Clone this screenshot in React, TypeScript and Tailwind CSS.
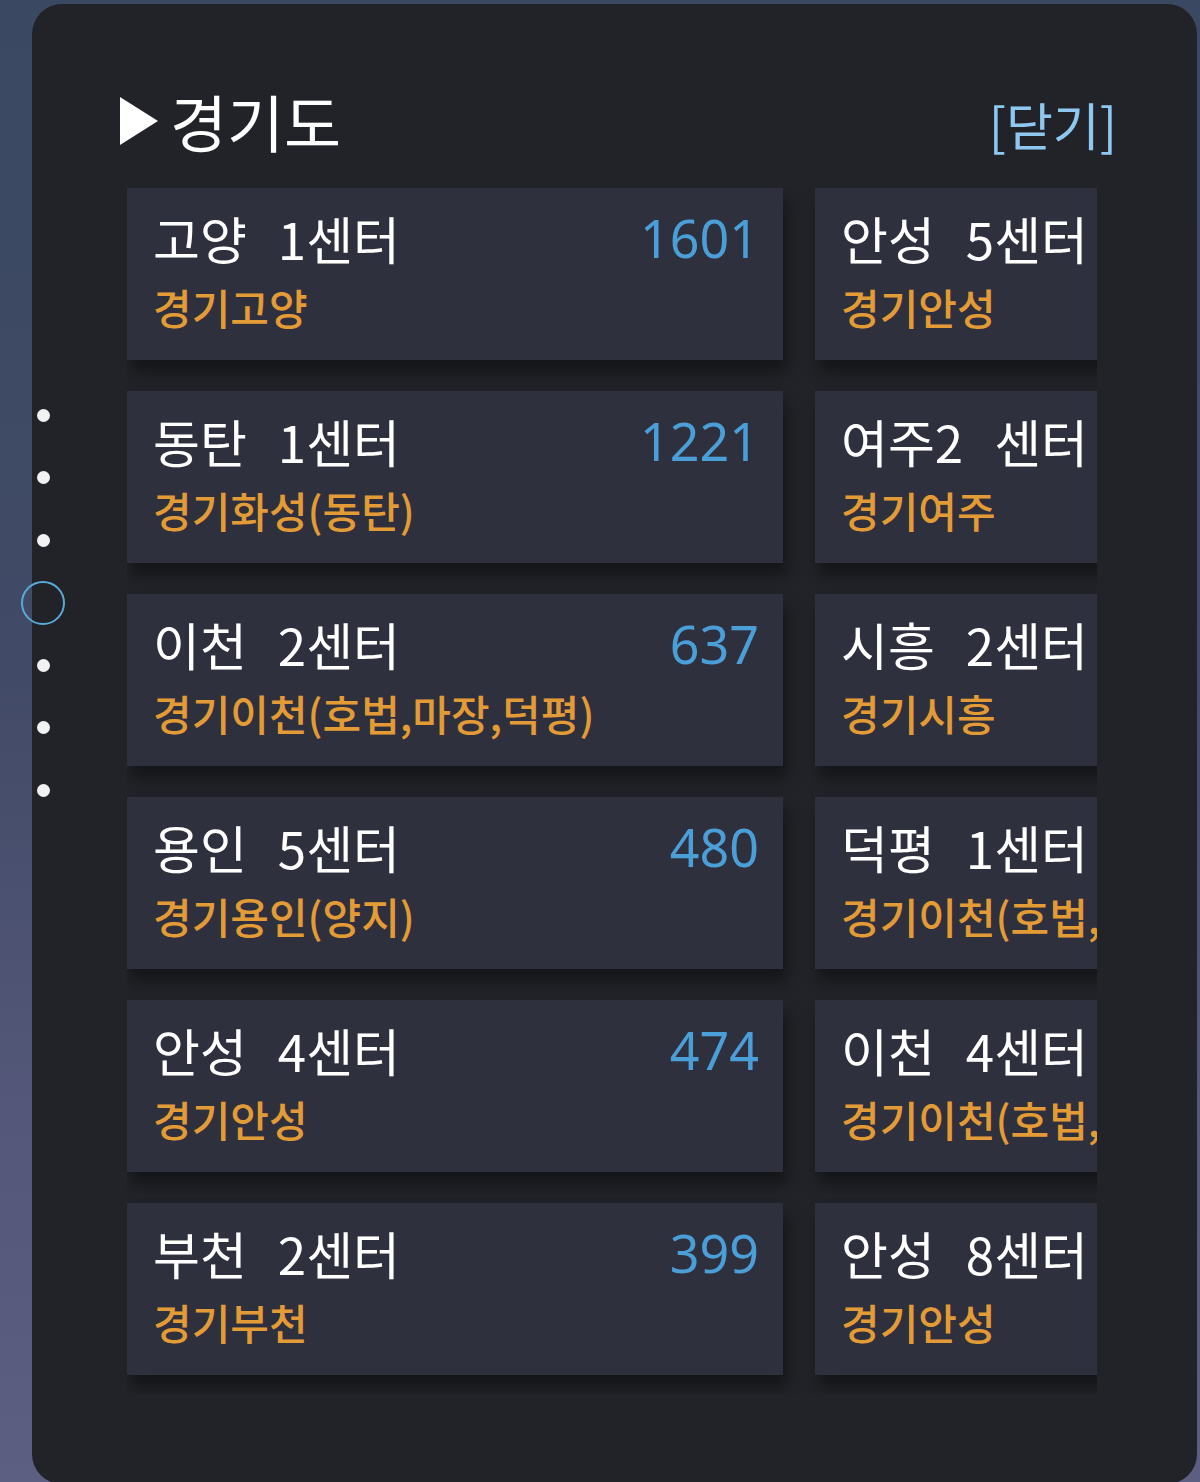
const centers = [
    { place: "고양", unit: "1센터", area: "경기고양", count: "1601" },
    { place: "안성", unit: "5센터", area: "경기안성", count: "" },
    { place: "동탄", unit: "1센터", area: "경기화성(동탄)", count: "1221" },
    { place: "여주2", unit: "센터", area: "경기여주", count: "" },
    { place: "이천", unit: "2센터", area: "경기이천(호법,마장,덕평)", count: "637" },
    { place: "시흥", unit: "2센터", area: "경기시흥", count: "" },
    { place: "용인", unit: "5센터", area: "경기용인(양지)", count: "480" },
    { place: "덕평", unit: "1센터", area: "경기이천(호법,마장,덕평)", count: "" },
    { place: "안성", unit: "4센터", area: "경기안성", count: "474" },
    { place: "이천", unit: "4센터", area: "경기이천(호법,마장,덕평)", count: "" },
    { place: "부천", unit: "2센터", area: "경기부천", count: "399" },
    { place: "안성", unit: "8센터", area: "경기안성", count: "" },
];

const FONT = "font-['Noto_Sans_CJK_KR','Noto_Sans',sans-serif]";

type Center = { place: string; unit: string; area: string; count: string };

function CenterCard({ place, unit, area, count }: Center) {
    return (
        <div
            className="
                relative
                h-[172px]
                w-[656px]
                bg-[#2f303e]
                pl-[26px]
                pr-[24px]
                pt-[25px]
                shadow-[4px_12px_14px_rgba(0,0,0,0.4)]
            "
        >
            <div className="flex items-center justify-between">
                <span className="flex gap-[31px] whitespace-nowrap text-[51px] leading-[50px] text-white">
                    <span>{place}</span>
                    <span>{unit}</span>
                </span>
                {count && (
                    <span className="text-[52px] leading-[50px] text-[#4b9fd8] font-['Noto_Sans',sans-serif]">
                        {count}
                    </span>
                )}
            </div>
            <div className="mt-[23px] whitespace-nowrap text-[42px] font-medium leading-[42px] text-[#e39b36]">
                {area}
            </div>
        </div>
    );
}

export default function App() {
    return (
        <div
            className={`
                relative
                h-[1482px]
                w-[1200px]
                overflow-hidden
                bg-[linear-gradient(180deg,#3a4961_0%,#414a66_45%,#545779_75%,#5c5e82_100%)]
                pt-[4px]
                pl-[32px]
                ${FONT}
            `}
        >
            {/* Panel */}

            <div className="h-[1480px] w-[1165px] rounded-[30px] bg-[#212328] pt-[86px]">

                {/* Header */}

                <div className="flex h-[62px] items-center justify-between pl-[88px] pr-[80px]">
                    <div className="flex items-center gap-[12px]">
                        <svg width="38" height="48" viewBox="0 0 38 48">
                            <polygon points="0,0 38,24 0,48" fill="#ffffff" />
                        </svg>
                        <span className="text-[62px] leading-[62px] text-white">경기도</span>
                    </div>
                    <button className="mt-[6px] text-[51px] leading-[50px] text-[#8ec8f0]">
                        [닫기]
                    </button>
                </div>

                {/* Center grid */}

                <div className="mt-[36px] ml-[95px] w-[970px] overflow-hidden pb-[20px]">
                    <div className="grid w-[1344px] grid-cols-[656px_656px] gap-x-[32px] gap-y-[31px]">
                        {centers.map((c, i) => (
                            <CenterCard key={i} {...c} />
                        ))}
                    </div>
                </div>

            </div>

            {/* Page indicator */}

            <div className="absolute left-[21px] top-[384px] flex w-[44px] flex-col items-center">
                {[0, 1, 2, 3, 4, 5, 6].map((i) => (
                    <div key={i} className="flex h-[62.5px] items-center justify-center">
                        {i === 3 ? (
                            <div className="h-[44px] w-[44px] rounded-full border-2 border-[#5aaad9]" />
                        ) : (
                            <div className="h-[13px] w-[13px] rounded-full bg-[#f2f2f2]" />
                        )}
                    </div>
                ))}
            </div>
        </div>
    );
}
